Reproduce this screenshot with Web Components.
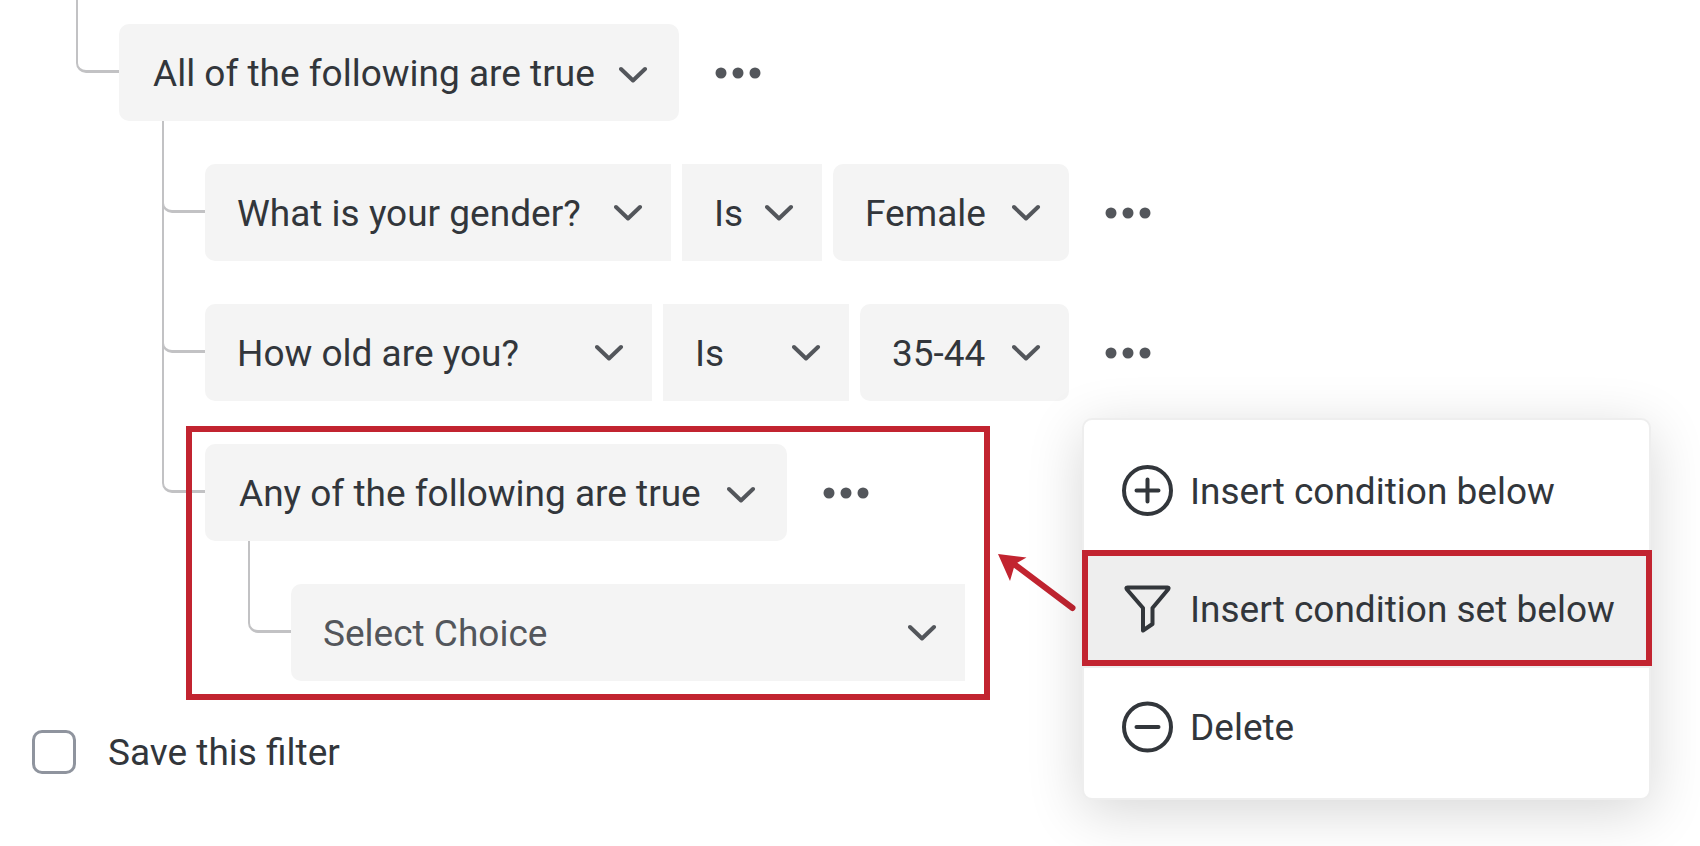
<!DOCTYPE html>
<html lang="en">
<head>
<meta charset="utf-8">
<title>Filter builder</title>
<style>
  body {
    margin: 0;
    background: #fff;
    color: #32363b;
    font: 450 37px/48px Roboto, "Liberation Sans", sans-serif;
  }
</style>
</head>
<body>
<filter-builder>
  <tree-branch first last>
    <condition-set label="All of the following are true" width="560">
      <tree-branch>
        <condition-row>
          <filter-select label="Question" value="What is your gender?" width="466" shape="start"></filter-select>
          <filter-select label="Operator" value="Is" width="140" shape="middle"></filter-select>
          <filter-select label="Answer" value="Female" width="236"></filter-select>
          <more-button></more-button>
        </condition-row>
      </tree-branch>
      <tree-branch>
        <condition-row>
          <filter-select label="Question" value="How old are you?" width="447" shape="start"></filter-select>
          <filter-select label="Operator" value="Is" width="186" shape="middle"></filter-select>
          <filter-select label="Answer" value="35-44" width="209"></filter-select>
          <more-button></more-button>
        </condition-row>
      </tree-branch>
      <tree-branch last>
        <call-out>
          <condition-set label="Any of the following are true" width="582">
            <tree-branch last>
              <filter-select label="Choice" value="Select Choice" width="674" shape="start" placeholder></filter-select>
            </tree-branch>
          </condition-set>
        </call-out>
      </tree-branch>
    </condition-set>
  </tree-branch>
  <save-filter>Save this filter</save-filter>
  <callout-arrow slot="overlay"></callout-arrow>
  <context-menu slot="overlay">
    <menu-item icon="plus">Insert condition below</menu-item>
    <menu-item icon="filter" active>Insert condition set below</menu-item>
    <menu-item icon="minus">Delete</menu-item>
  </context-menu>
</filter-builder>

<script>
  const define = (name, render) => customElements.define(name, class extends HTMLElement {
    connectedCallback() {
      if (this.shadowRoot) return;
      this.attachShadow({ mode: 'open' }).innerHTML = render(this);
    }
  });

  define('filter-builder', () => `
    <style>
      :host { display: block; position: relative; overflow: hidden; padding: 0 32px 72px; }
      ::slotted(save-filter) { margin-top: 46px; }
    </style>
    <main><slot></slot></main>
    <slot name="overlay"></slot>`);

  /* A child of the tree: a rail with its elbow on the left, the content on the right. */
  define('tree-branch', () => `
    <style>
      :host { --gap: 43px; --line: #c2c2c4; display: flex; width: fit-content; margin-left: 43px; }
      :host([first]) { --gap: 24px; margin-left: 44px; }
      .rail { flex: none; width: 43px; background: linear-gradient(var(--line), var(--line)) 0 0 / 2px 100% no-repeat; }
      :host([last]) .rail { background: none; }
      .elbow {
        box-sizing: border-box; height: calc(var(--gap) + 49px);
        border: solid var(--line); border-width: 0 0 3px 2px; border-bottom-left-radius: 10px;
      }
      .content { padding-top: var(--gap); }
    </style>
    <div class="rail"><div class="elbow"></div></div>
    <div class="content"><slot></slot></div>`);

  define('condition-row', () => `
    <style>
      :host { display: flex; align-items: center; gap: 11px; }
      ::slotted(more-button) { margin-left: 15px; }
    </style>
    <slot></slot>`);

  define('condition-set', el => `
    <style>
      :host { display: block; }
      header { display: flex; align-items: center; gap: 26px; }
    </style>
    <header>
      <filter-select label="Match" value="${el.getAttribute('label')}" width="${el.getAttribute('width')}" group></filter-select>
      <more-button></more-button>
    </header>
    <slot></slot>`);

  define('filter-select', el => `
    <style>
      :host { display: grid; width: ${el.getAttribute('width')}px; height: 97px; }
      select, svg { grid-area: 1 / 1; }
      select {
        appearance: none; box-sizing: border-box; width: 100%; margin: 0; border: 0; border-radius: 10px;
        padding: 2px 32px 0; background: #f4f4f4; color: inherit; font: inherit; cursor: pointer;
      }
      svg {
        justify-self: end; align-self: center; margin-right: 28px; pointer-events: none;
        fill: none; stroke: #53565b; stroke-width: 4; stroke-linecap: round; stroke-linejoin: round;
      }
      :host([shape=start]) select { border-radius: 10px 0 0 10px; }
      :host([shape=middle]) select { border-radius: 0; }
      :host([placeholder]) select { color: #53565b; }
      :host([group]) select { padding: 2px 34px 0; }
      :host([group]) svg { margin: 4px 31px 0 0; }
    </style>
    <select aria-label="${el.getAttribute('label')}"><option>${el.getAttribute('value')}</option></select>
    <svg width="29" height="18" viewBox="0 0 29 18"><path d="M2 3 14 14.500 26 3"/></svg>`);

  define('more-button', () => `
    <style>
      :host { display: block; }
      button { display: block; margin: 0; border: 0; padding: 10px; background: none; cursor: pointer; }
      svg { display: block; fill: #53565b; }
    </style>
    <button type="button" aria-label="More options">
      <svg width="46" height="12" viewBox="0 0 46 12"><circle cx="6" cy="6" r="5.500"/><circle cx="23" cy="6" r="5.500"/><circle cx="40" cy="6" r="5.500"/></svg>
    </button>`);

  define('call-out', () => `
    <style>
      :host { display: block; position: relative; }
      :host::after {
        content: ""; position: absolute; inset: -18px -25px -19px -19px;
        border: 6px solid #c22430; pointer-events: none;
      }
    </style>
    <slot></slot>`);

  define('save-filter', () => `
    <style>
      :host { display: block; }
      label { display: flex; align-items: center; gap: 32px; width: fit-content; cursor: pointer; }
      span { padding-top: 2px; }
      input {
        appearance: none; box-sizing: border-box; width: 44px; height: 44px; margin: 0;
        border: 3px solid #8f949e; border-radius: 10px; background: #fff;
      }
    </style>
    <label><input type="checkbox"><span><slot></slot></span></label>`);

  define('callout-arrow', () => `
    <style>
      :host { position: absolute; left: 998px; top: 552px; }
      svg { display: block; }
    </style>
    <svg width="80" height="62" viewBox="0 0 80 62" aria-hidden="true">
      <path d="M16 12 74.500 56" stroke="#c22430" stroke-width="6" stroke-linecap="round"/>
      <path d="M0 2 28.500 5.500 17 12 12 29Z" fill="#c22430"/>
    </svg>`);

  define('context-menu', () => `
    <style>
      :host {
        position: absolute; left: 1082px; top: 418px; box-sizing: border-box; width: 569px;
        padding: 12px 0; border: 2px solid #eee; border-radius: 10px; background: #fff;
        box-shadow: 0 12px 56px rgba(0, 0, 0, .16);
      }
    </style>
    <div role="menu"><slot></slot></div>`);

  const icons = {
    plus: '<circle cx="25.500" cy="25.500" r="23.500"/><path d="M25.500 14.500V36.500M14.500 25.500H36.500"/>',
    minus: '<circle cx="25.500" cy="26" r="23.500"/><path d="M14.500 26H36.500"/>',
    filter: '<path d="M5.500 4.500H45.500Q47.500 4.500 46 6.500L30.500 25V41L21 47.500V25L5 6.500Q3.500 4.500 5.500 4.500Z"/>'
  };

  define('menu-item', el => `
    <style>
      :host { display: block; position: relative; }
      button {
        display: flex; align-items: center; gap: 16px; box-sizing: border-box; width: 100%; height: 118px;
        margin: 0; border: 0; padding: 0 38px; background: none; color: inherit; font: inherit;
        text-align: left; white-space: nowrap; cursor: pointer;
      }
      span { padding-top: 2px; }
      svg { flex: none; fill: none; stroke: #32363b; stroke-width: 4; stroke-linecap: round; stroke-linejoin: round; }
      :host([active]) button { background: #eee; }
      :host([active])::after {
        content: ""; position: absolute; inset: 0 -3px 2px -2px;
        border: 6px solid #c22430; pointer-events: none;
      }
    </style>
    <button type="button" role="menuitem">
      <svg width="52" height="52" viewBox="0 0 52 52">${icons[el.getAttribute('icon')]}</svg>
      <span><slot></slot></span>
    </button>`);
</script>
</body>
</html>
